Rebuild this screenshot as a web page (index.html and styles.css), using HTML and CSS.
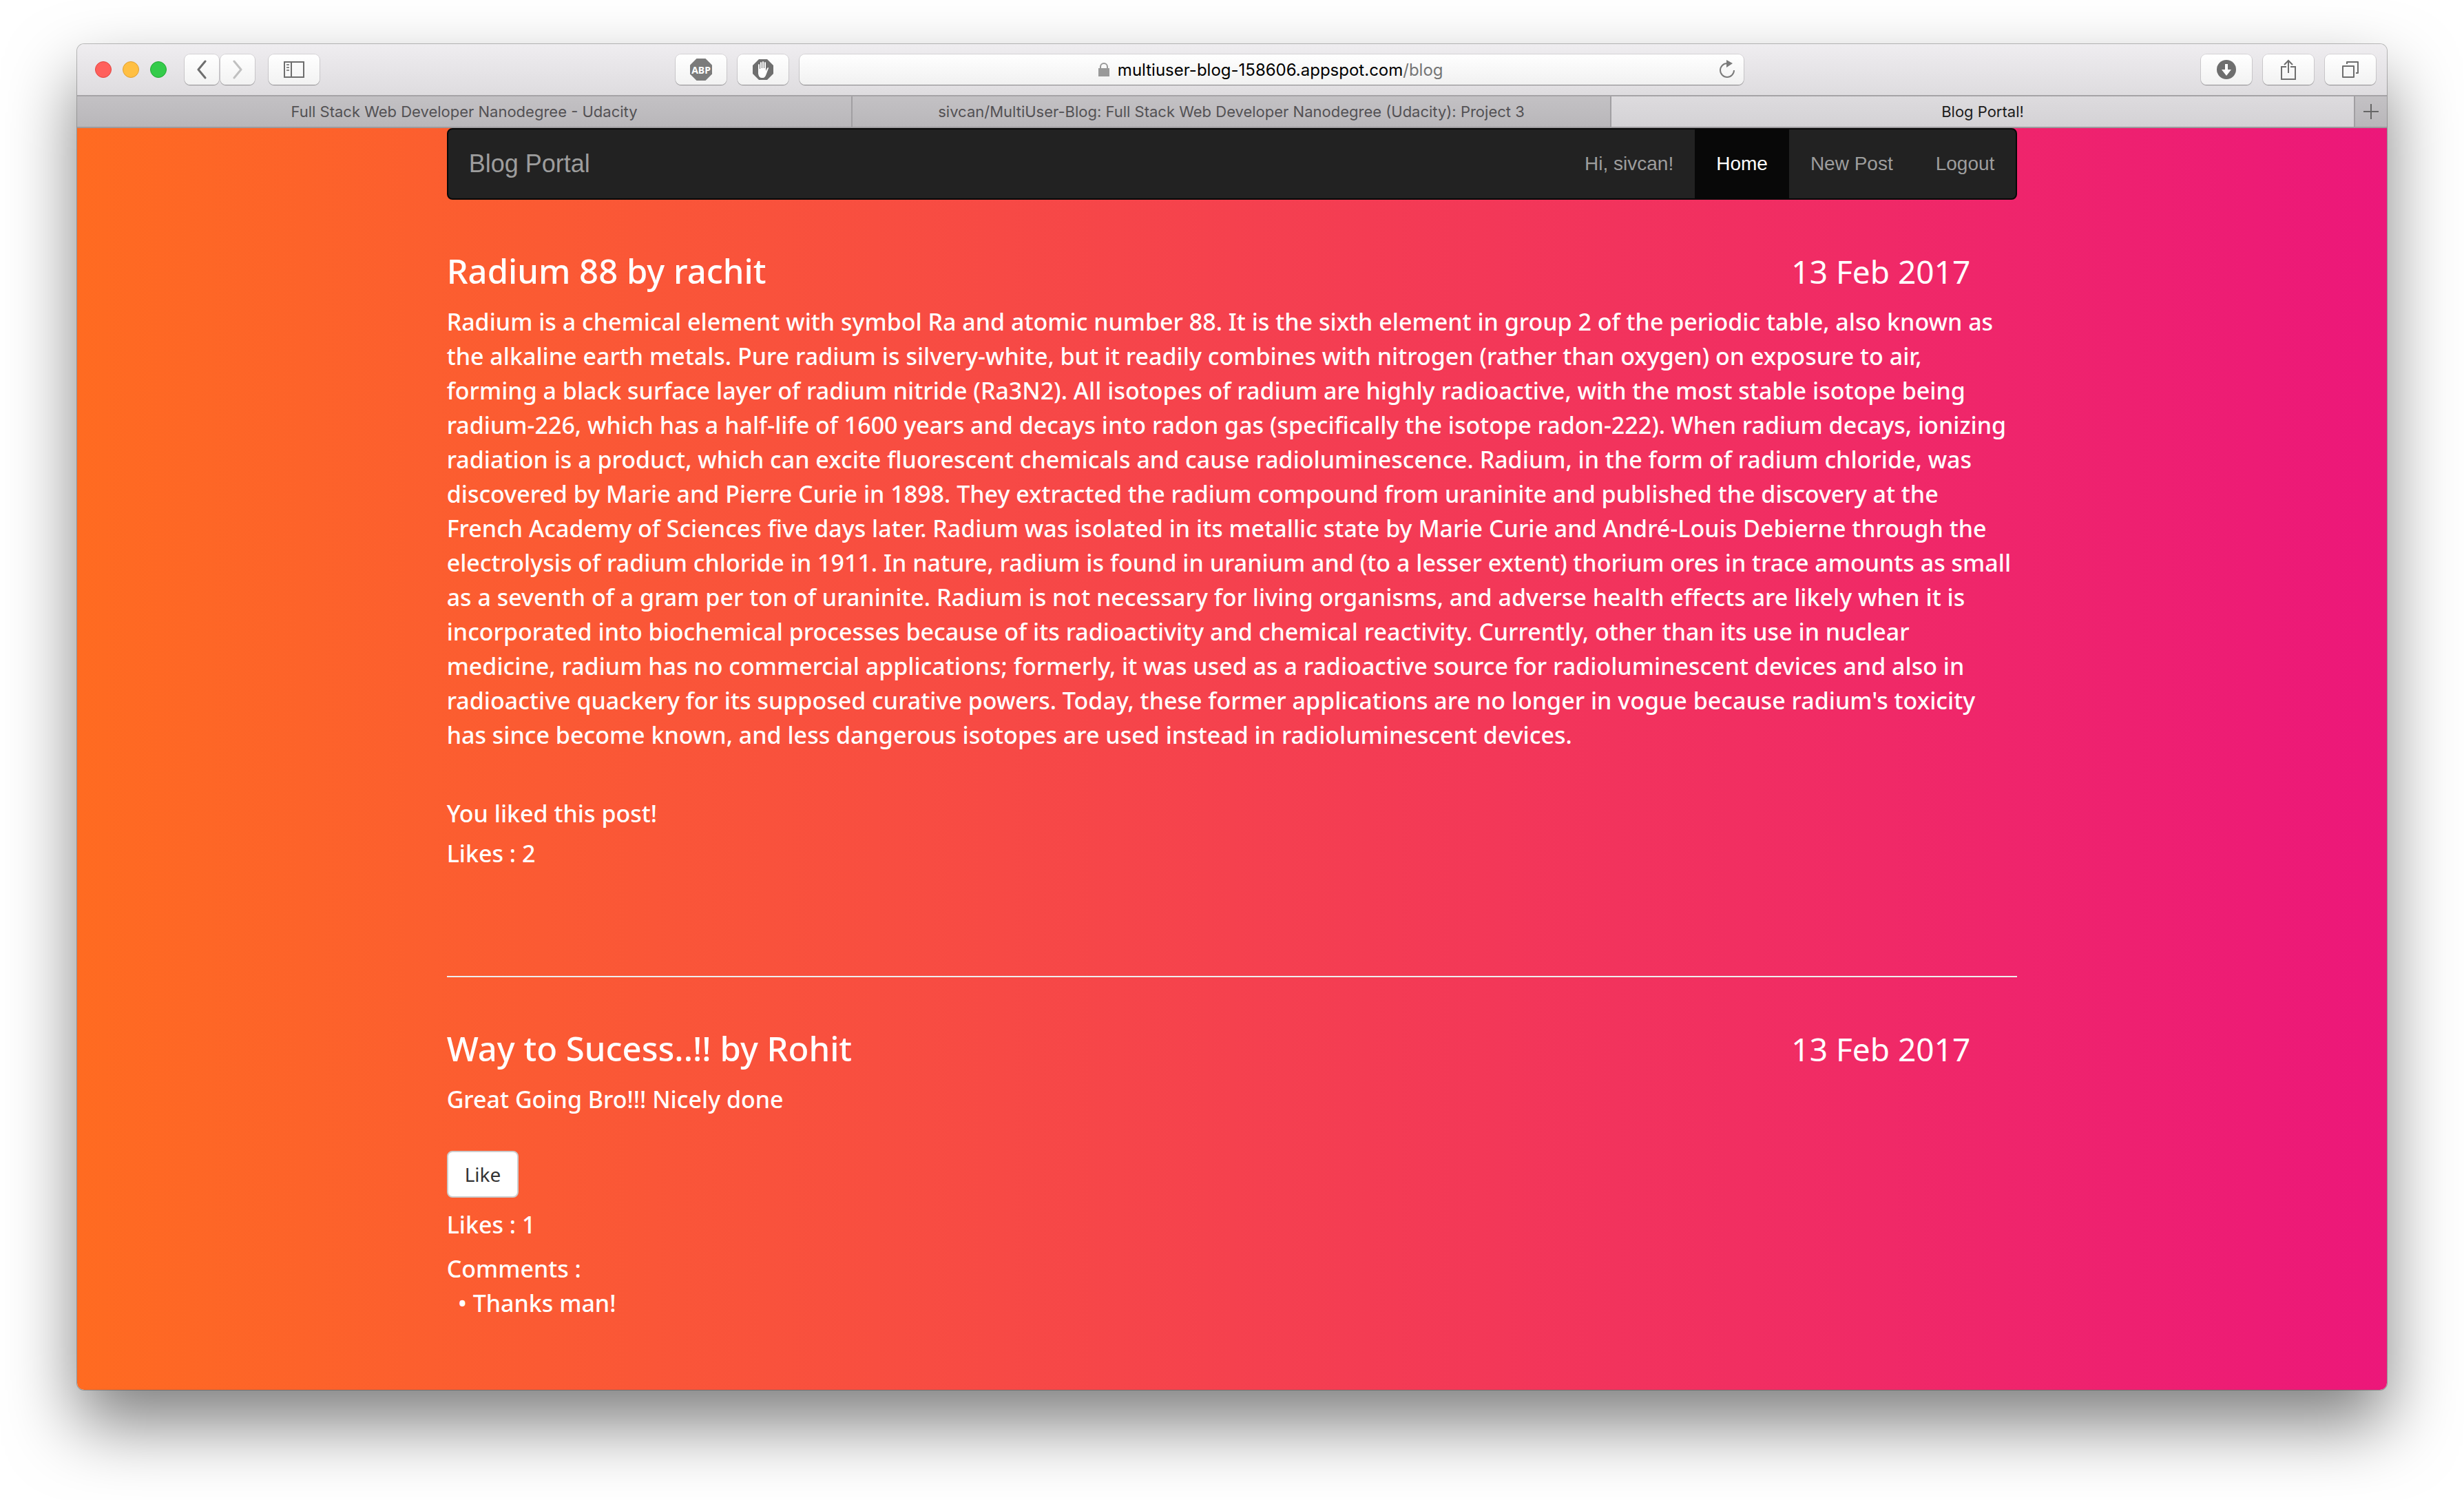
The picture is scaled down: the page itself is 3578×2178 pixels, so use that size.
FILE: index.html
```html
<!DOCTYPE html>
<html lang="en">
<head>
<meta charset="utf-8">
<title>Blog Portal!</title>
<link rel="stylesheet" href="styles.css">
</head>
<body>
<div class="window">
  <header class="toolbar">
    <div class="lights">
      <button class="light light-close" aria-label="Close"></button>
      <button class="light light-min" aria-label="Minimize"></button>
      <button class="light light-max" aria-label="Zoom"></button>
    </div>
    <div class="history">
      <button class="tool tool-small" aria-label="Back"><svg width="16" height="28" viewBox="0 0 16 28"><path d="M13 2 3 14l10 12" fill="none" stroke="#6e6e6e" stroke-width="3" stroke-linecap="round" stroke-linejoin="round"/></svg></button>
      <button class="tool tool-small" aria-label="Forward"><svg width="16" height="28" viewBox="0 0 16 28"><path d="m3 2 10 12L3 26" fill="none" stroke="#c0c0c0" stroke-width="3" stroke-linecap="round" stroke-linejoin="round"/></svg></button>
    </div>
    <button class="tool tool-sidebar" aria-label="Sidebar"><svg width="30" height="24" viewBox="0 0 30 24"><path d="M1 1h28v22H1zM11 1v22" fill="none" stroke="#6e6e6e" stroke-width="2"/><path d="M4 5h4M4 9h4M4 13h4" stroke="#8a8a8a" stroke-width="2"/></svg></button>
    <div class="space-left"></div>
    <div class="extensions">
      <button class="tool" aria-label="Adblock Plus"><svg width="32" height="32" viewBox="0 0 32 32"><path d="M9.500 0h13L32 9.500v13L22.500 32h-13L0 22.500v-13z" fill="#7b7b7b"/><text x="16" y="22" text-anchor="middle" class="abp">ABP</text></svg></button>
      <button class="tool" aria-label="AdBlock"><svg width="30" height="30" viewBox="0 0 30 30"><path d="M9 0h12l9 9v12l-9 9H9l-9-9V9z" fill="#6f6f6f"/><path d="M8 17V8q1-2 2 0v6h1V5q1-2 2 0v8h1V4q1-2 2 0v9h1V5q1-2 2 0v12l2-4q2-2 2 0l-3 8q-2 6-5 6h-2q-4 0-5-6z" fill="#fff"/></svg></button>
    </div>
    <div class="address">
      <div class="url">
        <svg width="16" height="20" viewBox="0 0 16 20"><path d="M0 8h16v12H0z" fill="#999"/><path d="M3 9V6a5 5 0 0 1 10 0v3" fill="none" stroke="#999" stroke-width="2"/></svg>
        <span>multiuser-blog-158606.appspot.com<span class="path">/blog</span></span>
      </div>
      <button class="reload" aria-label="Reload"><svg width="24" height="28" viewBox="0 0 24 28"><path d="M12 5a10 10 0 1 0 10 10" fill="none" stroke="#7b7b7b" stroke-width="2"/><path d="m11 0 9 5-9 6z" fill="#7b7b7b"/></svg></button>
    </div>
    <div class="space-right"></div>
    <div class="actions">
      <button class="tool" aria-label="Downloads"><svg width="28" height="28" viewBox="0 0 28 28"><circle cx="14" cy="14" r="14" fill="#6e6e6e"/><path d="M12 6h4v8h5l-7 9-7-9h5z" fill="#fff"/></svg></button>
      <button class="tool" aria-label="Share"><svg width="22" height="32" viewBox="0 0 22 32"><path d="M8 12H1v18h20V12h-7M11 21V3M5 9l6-6 6 6" fill="none" stroke="#6e6e6e" stroke-width="2"/></svg></button>
      <button class="tool" aria-label="Show all tabs"><svg width="24" height="24" viewBox="0 0 24 24"><path d="M1 7h16v16H1zM7 4V1h16v16h-3" fill="none" stroke="#6e6e6e" stroke-width="2" stroke-linejoin="round"/></svg></button>
    </div>
  </header>
  <nav class="tabs" aria-label="Tabs">
    <a class="tab" href="#">Full Stack Web Developer Nanodegree - Udacity</a>
    <a class="tab" href="#">sivcan/MultiUser-Blog: Full Stack Web Developer Nanodegree (Udacity): Project 3</a>
    <a class="tab tab-active" href="#">Blog Portal!</a>
    <button class="tab-new" aria-label="New tab"><svg width="22" height="22" viewBox="0 0 22 22"><path d="M11 0v22M0 11h22" stroke="#666" stroke-width="2"/></svg></button>
  </nav>
  <main class="page">
    <div class="container">
      <nav class="navbar">
        <a class="brand" href="#">Blog Portal</a>
        <a class="nav-link" href="#">Hi, sivcan!</a>
        <a class="nav-link nav-active" href="#">Home</a>
        <a class="nav-link" href="#">New Post</a>
        <a class="nav-link" href="#">Logout</a>
      </nav>
      <article class="post">
        <div class="post-head"><h2>Radium 88 by rachit</h2><time datetime="2017-02-13">13 Feb 2017</time></div>
        <p class="text">Radium is a chemical element with symbol Ra and atomic number 88. It is the sixth element in group 2 of the periodic table, also known as<br>
the alkaline earth metals. Pure radium is silvery-white, but it readily combines with nitrogen (rather than oxygen) on exposure to air,<br>
forming a black surface layer of radium nitride (Ra3N2). All isotopes of radium are highly radioactive, with the most stable isotope being<br>
radium-226, which has a half-life of 1600 years and decays into radon gas (specifically the isotope radon-222). When radium decays, ionizing<br>
radiation is a product, which can excite fluorescent chemicals and cause radioluminescence. Radium, in the form of radium chloride, was<br>
discovered by Marie and Pierre Curie in 1898. They extracted the radium compound from uraninite and published the discovery at the<br>
French Academy of Sciences five days later. Radium was isolated in its metallic state by Marie Curie and André-Louis Debierne through the<br>
electrolysis of radium chloride in 1911. In nature, radium is found in uranium and (to a lesser extent) thorium ores in trace amounts as small<br>
as a seventh of a gram per ton of uraninite. Radium is not necessary for living organisms, and adverse health effects are likely when it is<br>
incorporated into biochemical processes because of its radioactivity and chemical reactivity. Currently, other than its use in nuclear<br>
medicine, radium has no commercial applications; formerly, it was used as a radioactive source for radioluminescent devices and also in<br>
radioactive quackery for its supposed curative powers. Today, these former applications are no longer in vogue because radium's toxicity<br>
has since become known, and less dangerous isotopes are used instead in radioluminescent devices.</p>
        <p class="liked">You liked this post!</p>
        <p class="likes">Likes : 2</p>
      </article>
      <hr class="rule">
      <article class="post">
        <div class="post-head"><h2>Way to Sucess..!! by Rohit</h2><time datetime="2017-02-13">13 Feb 2017</time></div>
        <p class="text">Great Going Bro!!! Nicely done</p>
        <button class="like">Like</button>
        <p class="likes">Likes : 1</p>
        <p class="comments">Comments :</p>
        <ul class="comment-list"><li>Thanks man!</li></ul>
      </article>
    </div>
  </main>
</div>
</body>
</html>
```
FILE: styles.css
```css
* { box-sizing: border-box; margin: 0; }

body {
  display: flex;
  flex-direction: column;
  min-height: 100vh;
  padding: 64px 112px 160px;
  background: #fff;
  font-family: "Noto Sans", sans-serif;
  overflow-x: hidden;
}

button { padding: 0; border: 0; font: inherit; }
a { color: inherit; text-decoration: none; }
svg { display: block; }

.window {
  display: flex;
  flex: 1;
  flex-direction: column;
  border-radius: 10px;
  box-shadow: 0 0 0 1px rgba(0, 0, 0, 0.25), 0 50px 100px rgba(0, 0, 0, 0.5);
  overflow: hidden;
}

/* Browser toolbar */
.toolbar {
  display: flex;
  align-items: center;
  height: 76px;
  padding: 0 16px 0 26px;
  border-bottom: 2px solid #a5a3a6;
  background: linear-gradient(#efedf0, #dedcdf);
}

.lights { display: flex; gap: 16px; margin-right: 26px; }
.light { width: 24px; height: 24px; border: 1px solid #e2443f; border-radius: 50%; background: #ff605c; }
.light-min { border-color: #e0a033; background: #ffbf43; }
.light-max { border-color: #21a832; background: #34cb4a; }

.tool {
  display: flex;
  align-items: center;
  justify-content: center;
  width: 74px;
  height: 44px;
  border-radius: 8px;
  background: linear-gradient(#fff, #f2f2f2);
  box-shadow: 0 0 0 1px rgba(0, 0, 0, 0.1), 0 1px 1px rgba(0, 0, 0, 0.3);
}
.history { display: flex; gap: 2px; margin-right: 20px; }
.tool-small { width: 50px; }
.space-left { flex: 7; }
.space-right { flex: 9; }
.extensions { display: flex; gap: 16px; margin-right: 16px; }
.abp { fill: #fff; font: bold 14px "Noto Sans", sans-serif; }

.address {
  display: flex;
  align-items: center;
  width: 41.4%;
  height: 44px;
  padding-right: 12px;
  border-radius: 8px;
  background: linear-gradient(#fff, #f1f1f1);
  box-shadow: 0 0 0 1px rgba(0, 0, 0, 0.1), 0 1px 1px rgba(0, 0, 0, 0.35);
}
.url {
  display: flex;
  flex: 1;
  align-items: center;
  justify-content: center;
  gap: 12px;
  padding-left: 34px;
  color: #000;
  font: 24px "Inter", sans-serif;
}
.path { color: #757575; }
.reload { background: none; }
.actions { display: flex; gap: 16px; }

/* Tab strip */
.tabs {
  display: grid;
  grid-template-columns: 1126fr 1102fr 1078fr 48px;
  height: 46px;
  border-bottom: 2px solid #9d9b9e;
  background: linear-gradient(#c3c1c4, #b9b7ba);
}
.tab {
  overflow: hidden;
  border-right: 2px solid #a19fa2;
  color: #535154;
  font: 22px/44px "Inter", sans-serif;
  text-align: center;
  white-space: nowrap;
}
.tab-active { border-right: 0; background: linear-gradient(#dddbde, #d4d2d5); color: #1c1c1c; }
.tab-new {
  display: flex;
  align-items: center;
  justify-content: center;
  border-left: 2px solid #a19fa2;
  background: none;
}

/* Page */
.page {
  flex: 1;
  padding-bottom: 60px;
  background: linear-gradient(to right, #ff6b21, #f5414e 50%, #ec177a);
  color: #fff;
}
.container { width: 68%; margin: 0 auto; }

.navbar {
  display: flex;
  height: 104px;
  border: 2px solid #080808;
  border-radius: 8px;
  background: #222;
  color: #9d9d9d;
  font: 28px/100px "Liberation Sans", sans-serif;
}
.brand { margin-right: auto; padding: 0 30px; font-size: 36px; }
.nav-link { padding: 0 31px; }
.nav-active { background: #080808; color: #fff; }

.post { font-size: 34px; font-weight: 500; line-height: 50px; }
.post-head {
  display: grid;
  grid-template-columns: 1fr 328px;
  align-items: baseline;
  padding: 77px 0 22px;
  font-size: 46px;
  font-weight: 400;
  line-height: 52px;
}
.post-head h2 { font-size: 49px; font-weight: 500; }
.text { white-space: nowrap; }
.liked { margin-top: 64px; }
.likes { margin-top: 8px; }
.rule { height: 2px; margin-top: 153px; border: 0; background: #eee; }

.like {
  display: block;
  height: 68px;
  margin: 50px 0 14px;
  padding: 0 24px;
  border: 2px solid #ccc;
  border-radius: 8px;
  background: #fff;
  color: #333;
  font-size: 28px;
  font-weight: 400;
}
.like + .likes { margin-top: 0; }
.comments { margin-top: 14px; }
.comment-list { padding-left: 38px; list-style-type: "• "; }
```
